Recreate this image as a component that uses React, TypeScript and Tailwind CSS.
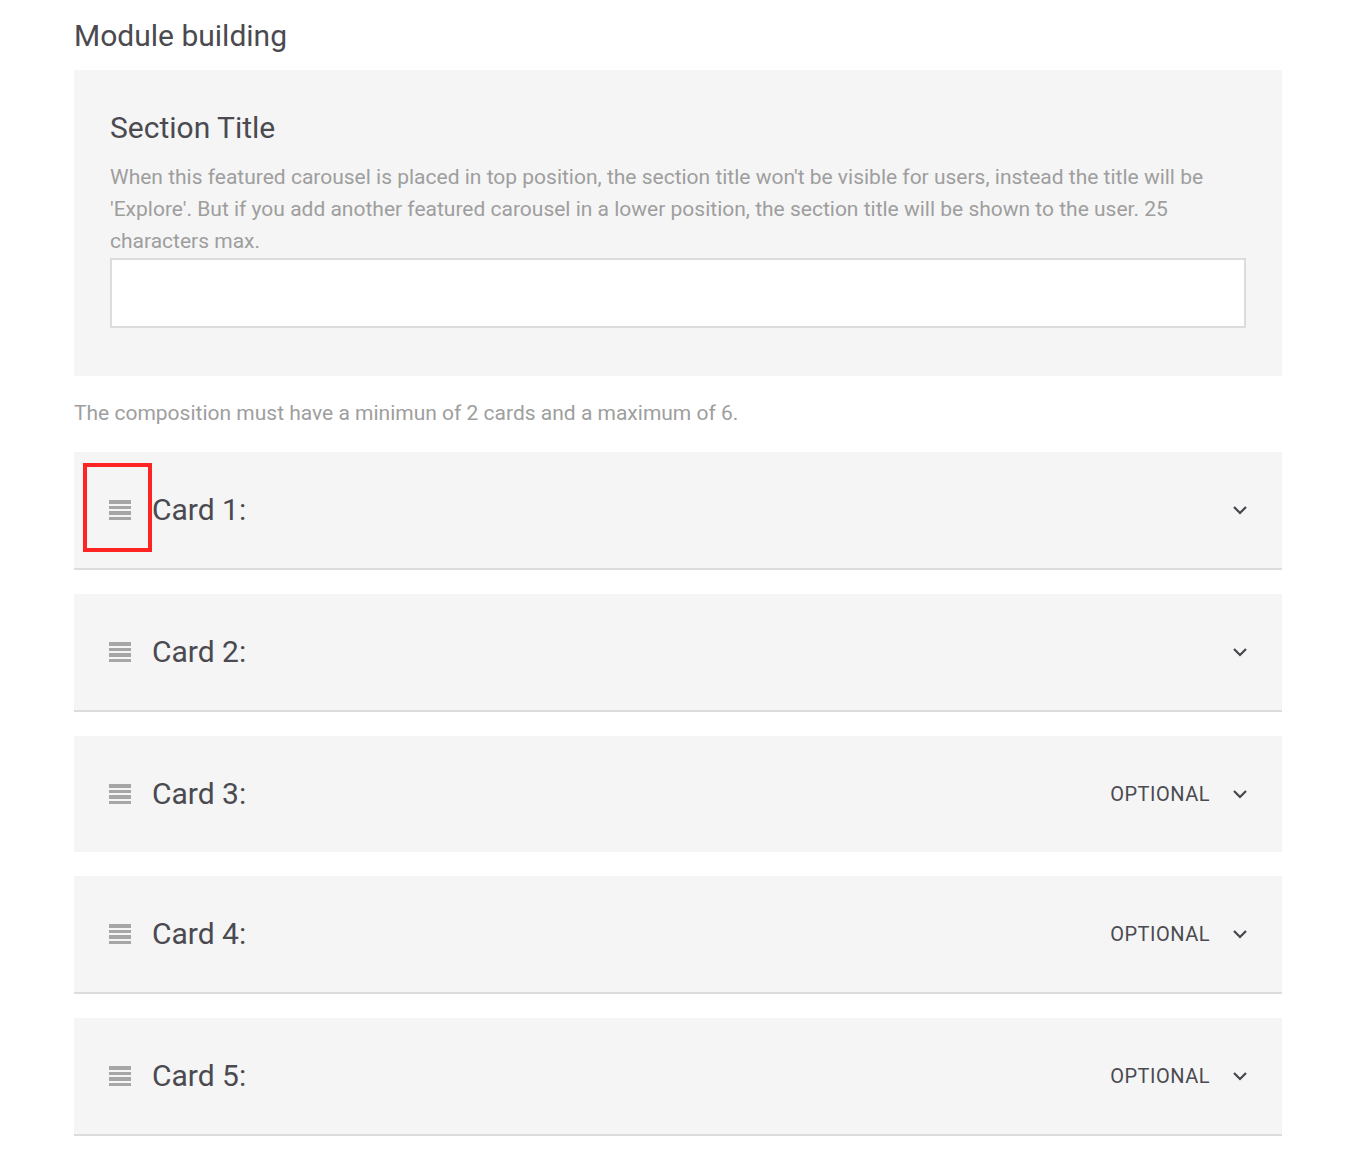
const cards = [
  { n: 1, optional: false, border: true, marked: true },
  { n: 2, optional: false, border: true },
  { n: 3, optional: true, border: false },
  { n: 4, optional: true, border: true },
  { n: 5, optional: true, border: true },
];

function DragHandle() {
  return (
    <div className="flex w-[22px] flex-col gap-[2px]">
      <span className="h-[3.5px] bg-[#a6a6a6]" />
      <span className="h-[3.5px] bg-[#a6a6a6]" />
      <span className="h-[3.5px] bg-[#a6a6a6]" />
      <span className="h-[3.5px] bg-[#a6a6a6]" />
    </div>
  );
}

function Chevron() {
  return (
    <svg width="16" height="10" viewBox="0 0 16 10" fill="none">
      <path d="M2 2l6 6 6-6" stroke="#45454c" strokeWidth="2.2" />
    </svg>
  );
}

export default function App() {
  return (
    <div className="min-h-[1150px] bg-white font-['Roboto',sans-serif]">
      <div className="ml-[74px] w-[1208px] pt-[18px]">
        <h1 className="text-[30px] leading-[36px] text-[#4a4a50]">Module building</h1>

        {/* SECTION TITLE */}
        <div className="mt-4 bg-[#f5f5f5] px-9 pt-10 pb-12">
          <h2 className="text-[30px] leading-[36px] text-[#4a4a50]">Section Title</h2>
          <p className="mt-[15px] text-[21px] leading-8 text-[#9e9e9e]">
            When this featured carousel is placed in top position, the section title won't be visible for users,
            instead the title will be 'Explore'. But if you add another featured carousel in a lower position, the
            section title will be shown to the user. 25 characters max.
          </p>
          <input className="mt-px block h-[70px] w-full border-2 border-[#dcdcdc] bg-white outline-none" />
        </div>

        <p className="mt-[21px] text-[21px] leading-8 text-[#9e9e9e]">
          The composition must have a minimun of 2 cards and a maximum of 6.
        </p>

        {/* CARDS */}
        <div className="mt-[23px] flex flex-col gap-6">
          {cards.map((c) => (
            <div
              key={c.n}
              className={
                c.border
                  ? "relative flex h-[118px] items-center border-b-2 border-[#dcdcdc] bg-[#f5f5f5] pr-[34px] pl-[35px]"
                  : "relative flex h-[116px] items-center bg-[#f5f5f5] pr-[34px] pl-[35px]"
              }
            >
              <DragHandle />
              <span className="ml-[21px] text-[30px] leading-9 text-[#4a4a50]">Card {c.n}:</span>
              <div className="ml-auto flex items-center gap-[22px]">
                {c.optional && (
                  <span className="text-[20px] tracking-[0.5px] text-[#4a4a50]">OPTIONAL</span>
                )}
                <Chevron />
              </div>
              {c.marked && (
                <div className="absolute top-[11px] left-[9px] h-[89px] w-[69px] border-4 border-[#ff2424]" />
              )}
            </div>
          ))}
        </div>
      </div>
    </div>
  );
}
